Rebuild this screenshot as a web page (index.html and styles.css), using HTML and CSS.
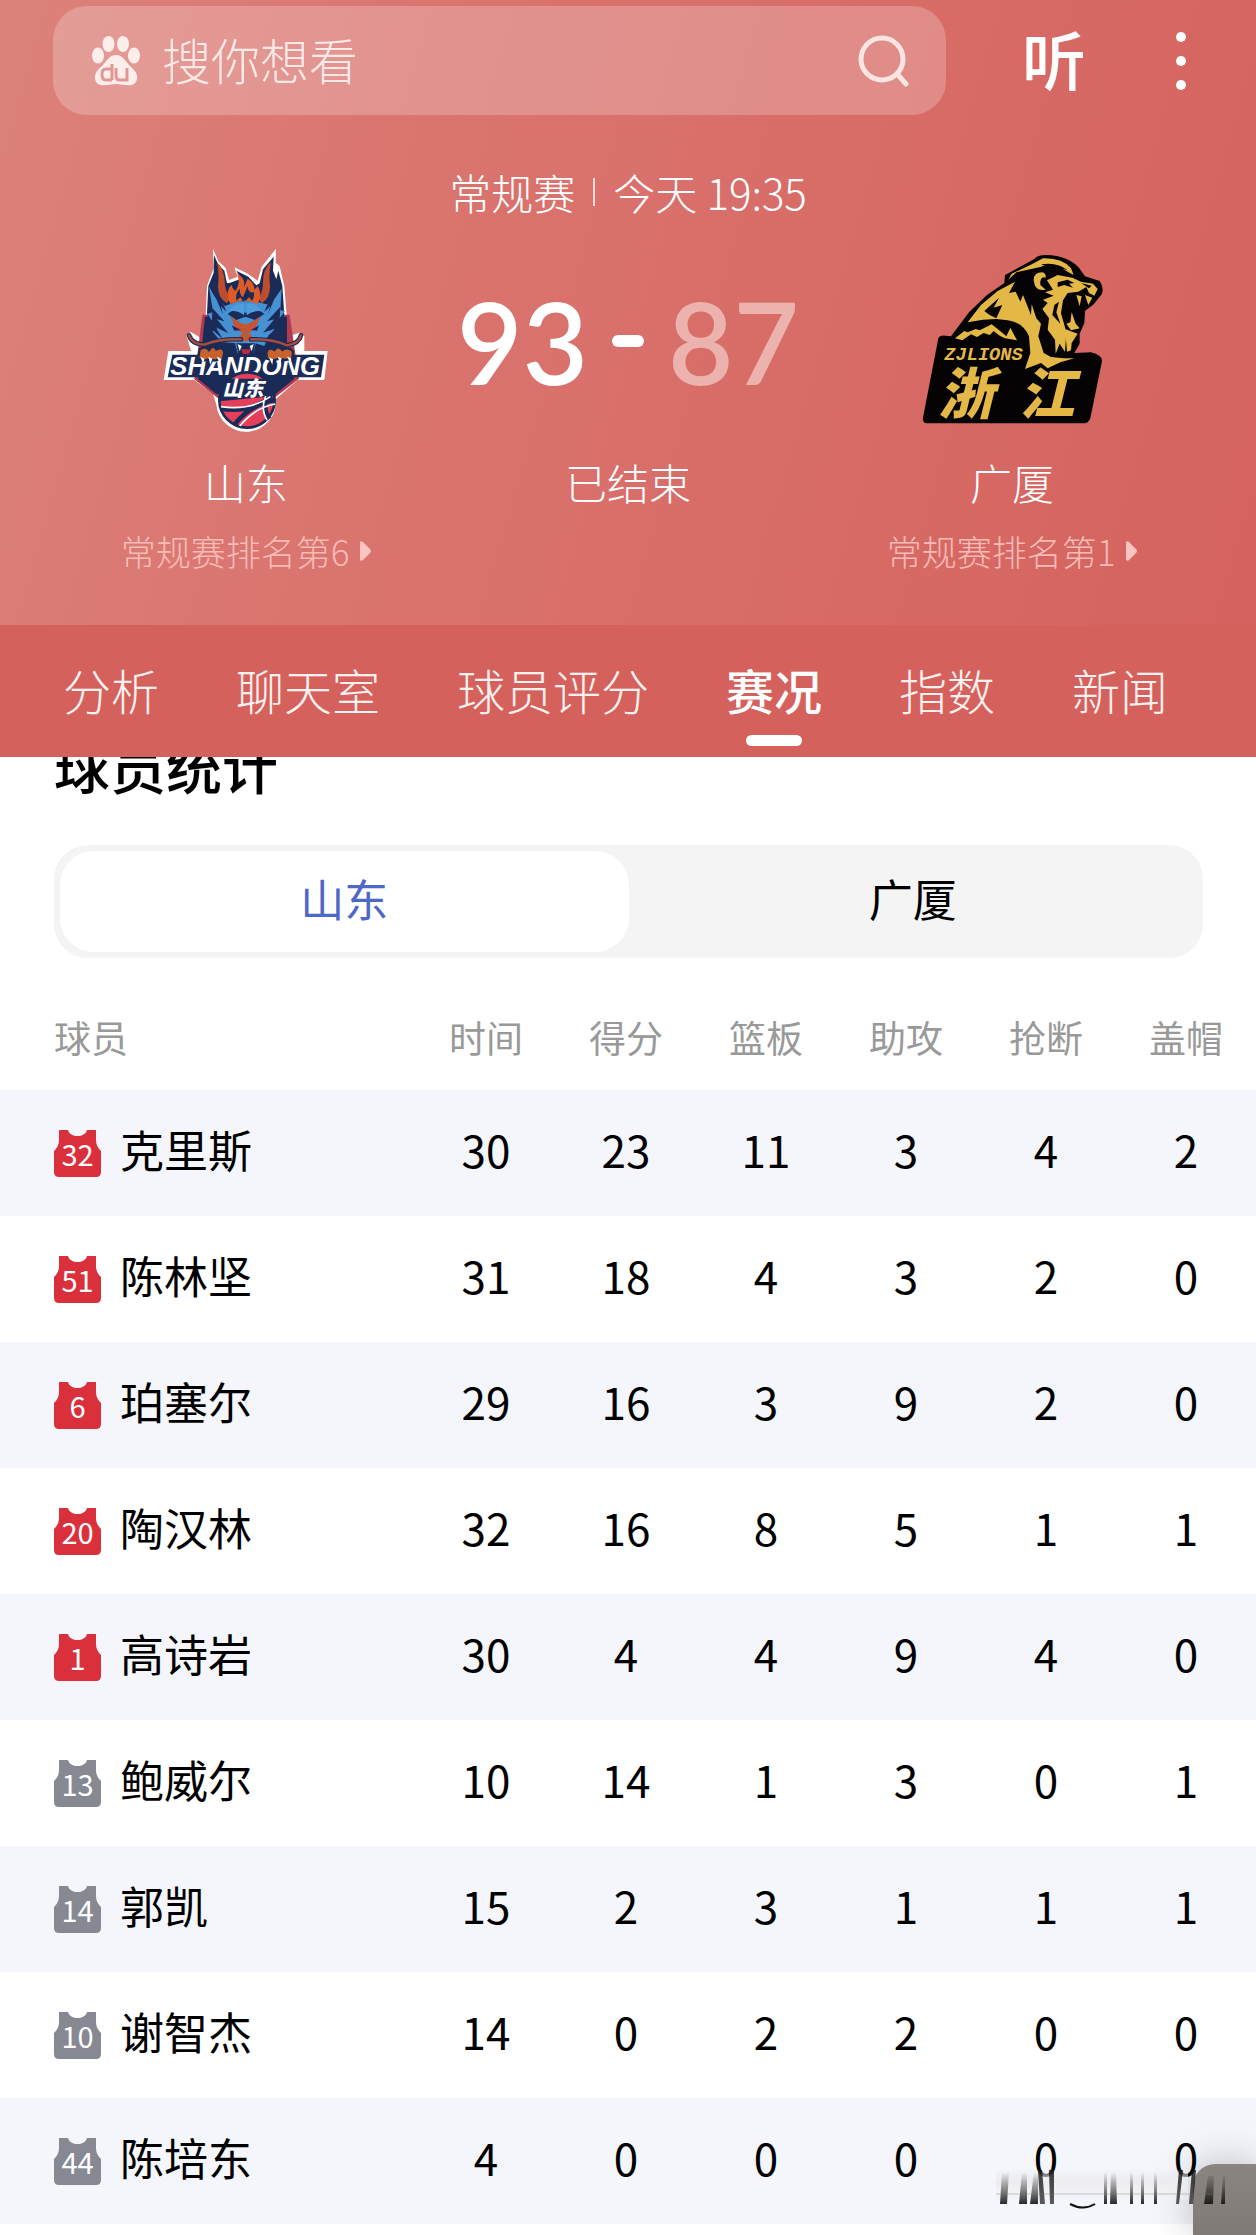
FILE: index.html
```html
<!DOCTYPE html>
<html lang="zh-CN">
<head>
<meta charset="utf-8">
<meta name="viewport" content="width=device-width, initial-scale=1">
<title>山东 93 - 87 广厦</title>
<link rel="stylesheet" href="styles.css">
</head>
<body>
<svg class="defs" aria-hidden="true">
  <symbol id="jersey" viewBox="0 0 47 47">
    <path d="M5 0H14C16 8 31 8 33 0H42V10C42 15 44 18 47 21V42Q47 47 42 47H5Q0 47 0 42V21C3 18 5 15 5 10Z"/>
  </symbol>
</svg>

<header class="hero">
  <div class="topbar">
    <label class="search">
      <svg class="paw" viewBox="0 0 48 50" aria-hidden="true">
        <ellipse cx="16.500" cy="8" rx="6" ry="8"/><ellipse cx="31" cy="8" rx="6" ry="8"/>
        <ellipse cx="6" cy="19.500" rx="6" ry="8"/><ellipse cx="42" cy="19.500" rx="6" ry="8"/>
        <path d="M24 19C17 19 15 25 10 30C4 35 1 40 4 46C8 52 17 48 24 48C31 48 40 52 44 46C47 40 44 35 38 30C33 25 31 19 24 19Z"/>
        <path class="paw-mark" d="M20 28V44M20 33H14Q10 33 10 38.500Q10 44 14 44H20M24 32V40Q24 44 28 44H35V32"/>
      </svg>
      <input class="search-input" type="search" placeholder="搜你想看" aria-label="搜索">
      <svg class="lens" viewBox="0 0 52 52" aria-hidden="true"><circle cx="24" cy="24" r="21"/><path d="M40 40L48 49"/></svg>
    </label>
    <div class="actions">
      <button class="listen" type="button">听</button>
      <button class="more" type="button" aria-label="更多"><i></i><i></i><i></i></button>
    </div>
  </div>

  <p class="event"><span>常规赛</span><i class="bar"></i><span>今天 19:35</span></p>

  <div class="board">
    <section class="team home">
      <div class="crest">
        <svg class="logo-sd" viewBox="60 30 510 561" role="img" aria-label="山东">
          <path fill="#fff" d="M216 38L232 76L254 96L264 132L290 122L280 94L318 112L350 134L362 92L405 38L404 80L416 90L430 150L437 238H446V300L474 290L490 300V345H560L550 432H470L404 490A88 88 0 0 1 226 506L216 474L160 432H68L82 345H150L136 298L150 288L180 306L188 238H194L198 150L218 96Z"/>
          <path fill="#b03a50" d="M184 236H446L474 428L400 486H230L160 430Z"/>
          <path fill="#1b2b57" d="M192 242H438V330L460 428L404 474H226L172 430Z"/>
          <path fill="#1b2b57" d="M219 58L232 86L250 104L258 142L268 140L300 128L286 104L322 122L346 148L356 142L366 100L398 62L396 104L406 130L412 104L424 150L430 238L388 328L344 358H278L226 320L198 232L202 150L218 110Z"/>
          <path fill="#4691d4" d="M204 152L222 184L252 210L290 196H340L382 206L404 184L422 158L418 222L432 226L404 262L414 278L384 296L370 330L344 322L338 352H290L282 322L240 318L214 286L228 278L200 234L216 228Z"/>
          <path fill="#1b2b57" d="M214 216L250 256L228 250L262 292L224 274L246 310L212 280ZM418 212L378 256L400 250L366 290L402 278L374 310L414 284ZM260 234Q290 208 313 232Q340 206 370 234L342 252L313 242L286 252Z"/>
          <path fill="#1b2b57" d="M222 180Q248 196 256 228L240 210L246 236ZM404 180Q380 196 370 228L388 210L380 236Z"/>
          <path fill="#4f9ddd" d="M264 226Q282 198 309 204V238Q290 222 264 226ZM317 204Q346 198 360 226Q338 222 317 238Z"/>
          <path fill="#bd4d2c" d="M228 78Q252 100 252 148Q256 172 268 186L258 202Q226 184 232 138Q234 106 228 78ZM390 78Q364 100 366 146Q364 172 352 186L362 202Q392 184 386 138Q384 104 390 78Z"/>
          <path fill="#dc5b27" d="M268 204Q250 168 272 146Q274 160 284 164Q300 142 288 112Q316 128 308 156L320 128Q342 142 340 162L350 150Q366 176 350 204Q310 184 268 204Z"/>
          <path fill="#1b2b57" d="M286 194Q282 172 296 158Q296 176 306 184L320 150Q322 174 338 168Q342 180 334 194L324 184L316 192L306 196L298 184Z"/>
          <path fill="#c35730" d="M268 242L306 264H320L360 242L340 278L326 290H302L284 278Z"/>
          <path fill="#e34247" d="M280 262L302 276L286 280ZM348 262L326 276L342 280Z"/>
          <path fill="#1b2b57" d="M272 268L300 282L280 284ZM354 268L330 282L348 284Z"/>
          <path fill="#c35730" d="M296 300Q304 288 316 292Q330 290 334 304L322 316H304Z"/>
          <path fill="none" stroke="#1b2b57" stroke-width="14" stroke-linecap="round" d="M144 298Q154 326 190 326Q236 308 300 310M480 298Q474 324 438 328Q392 308 330 310"/>
          <path fill="none" stroke="#a94d3a" stroke-width="7" stroke-linecap="round" d="M144 298Q154 326 190 326Q236 308 300 310M480 298Q474 324 438 328Q392 308 330 310"/>
          <path fill="#1b2b57" d="M286 322H342L336 362H294Z"/><path fill="#b92a3b" d="M300 340H330L324 354H306Z"/>
          <path fill="#fff" d="M290 324L302 330L296 346ZM338 324L326 330L332 346Z"/>
          <path fill="#1b2b57" d="M94 356H550L540 424H80Z"/>
          <text class="sd-word" x="88" y="417">SHANDONG</text>
          <path fill="#c8622c" stroke="#1b2b57" stroke-width="7" d="M176 340Q194 328 204 342Q216 324 226 340Q246 330 250 350L246 368L222 374L204 370L186 374L172 366ZM376 350Q382 330 400 342Q412 326 424 342Q442 330 456 346L454 368L432 372L414 368L396 374L378 368Z"/>
          <path fill="#fff" d="M178 362L190 368L188 386ZM202 362L214 368L208 386ZM228 362L242 368L236 384ZM384 364L396 370L394 386ZM410 362L422 366L418 384ZM438 362L450 366L450 384Z"/>
          <circle cx="318" cy="492" r="83" fill="#e4405a" stroke="#1b2b57" stroke-width="8"/>
          <path fill="#1b2b57" d="M240 428H384L398 480L236 496Z"/>
          <path fill="none" stroke="#1b2b57" stroke-width="14" d="M238 518Q330 532 392 480M280 566Q330 504 402 492M380 470Q362 520 386 548"/>
          <path fill="none" stroke="#fff" stroke-width="5" d="M240 512Q330 524 388 482M296 570Q340 516 402 504M374 480Q358 520 378 552"/>
          <text class="sd-cn" x="244" y="481">山东</text>
        </svg>
      </div>
      <h2 class="name">山东</h2>
      <a class="rank" href="#rank-home">常规赛排名第6<svg class="tri" viewBox="0 0 11 20" aria-hidden="true"><path d="M0 1Q2-1 4 2L10 8Q12 10 10 12L4 18Q2 21 0 19Z"/></svg></a>
    </section>

    <section class="result">
      <p class="score"><b>93</b><i class="dash"></i><b class="lost">87</b></p>
      <p class="name">已结束</p>
    </section>

    <section class="team away">
      <div class="crest">
        <svg class="logo-zj" viewBox="60 50 549 516" role="img" aria-label="广厦">
          <path fill="#050303" d="M400 68Q408 56 436 56Q500 58 534 94L552 120L596 134Q610 154 602 174L578 204L552 224L550 260L536 292V322L520 350L570 348Q604 356 603 374L568 546Q562 562 548 561H78Q64 560 66 544L112 306Q116 296 134 298L150 300L204 228L258 176L310 140L312 116L356 92Z"/>
          <path fill="#e4b847" d="M388 86L426 66Q484 64 510 96L518 116L496 104Q452 72 418 92L346 108L322 130L332 112Z"/>
          <path fill="#050303" d="M420 84Q470 76 500 102L470 94L440 92Z"/>
          <path fill="#e4b847" d="M200 258L240 206L290 164L342 136L324 170L344 166L358 196L366 176L390 236L392 204L406 246L420 262L412 300L428 350L450 362L488 366L520 366L478 378L440 396L420 380L372 398L388 350L384 300Q366 258 320 252L286 248L246 250Z"/>
          <path fill="#050303" d="M250 224L294 184L278 214L304 206L286 246L266 236Z"/>
          <path fill="#e4b847" d="M398 132Q398 108 424 108Q436 112 434 124Q416 118 418 146L434 160Q410 164 402 148ZM438 132L470 116L514 124L540 136L576 142L590 158L580 178L564 170L556 152L532 166L500 170L486 192L480 230L496 288L492 346L476 322L464 352L462 310L440 280L444 246L424 218L440 200L426 190L458 178L432 168L456 160Z"/>
          <path fill="#050303" d="M470 138L500 130L520 140L504 142L516 154L490 146L470 152ZM540 140L572 148L564 156ZM504 178L534 168L572 180L552 212L542 270L518 286L494 272L482 234L488 198ZM460 206L474 196L466 228L478 262L454 236Z"/>
          <path fill="#e4b847" d="M526 176L542 180L536 210ZM552 176L574 184L562 206ZM512 228L524 262L536 276L510 282L496 262L508 258Z"/>
          <path fill="#050303" d="M190 300L240 262H316Q372 276 372 330L356 392L180 380Z"/>
          <path fill="#e4b847" d="M492 278L530 292L512 320L510 342L498 346ZM162 306L190 284L200 288L224 278L236 282L272 264L302 288L316 300L328 274L348 312L312 306L296 298L278 284L266 296L248 290L228 302L210 294L184 312Z"/>
          <text class="zj-word" x="130" y="372">ZJLIONS</text>
          <text class="zj-cn" x="112" y="532">浙</text>
          <text class="zj-cn" x="354" y="532">江</text>
        </svg>
      </div>
      <h2 class="name">广厦</h2>
      <a class="rank" href="#rank-away">常规赛排名第1<svg class="tri" viewBox="0 0 11 20" aria-hidden="true"><path d="M0 1Q2-1 4 2L10 8Q12 10 10 12L4 18Q2 21 0 19Z"/></svg></a>
    </section>
  </div>
</header>

<nav class="tabs">
  <a href="#analysis">分析</a>
  <a href="#chat">聊天室</a>
  <a href="#rating">球员评分</a>
  <a class="active" href="#live" aria-current="page">赛况</a>
  <a href="#odds">指数</a>
  <a href="#news">新闻</a>
</nav>

<main class="stats">
  <h1 class="title">球员统计</h1>
  <div class="switch">
    <button class="on" type="button" aria-pressed="true">山东</button>
    <button type="button" aria-pressed="false">广厦</button>
  </div>
  <table class="table">
    <thead>
      <tr><th class="who" scope="col">球员</th><th scope="col">时间</th><th scope="col">得分</th><th scope="col">篮板</th><th scope="col">助攻</th><th scope="col">抢断</th><th scope="col">盖帽</th></tr>
    </thead>
    <tbody>
      <tr><td class="who"><div class="player"><span class="shirt"><svg><use href="#jersey"/></svg><b>32</b></span>克里斯</div></td><td>30</td><td>23</td><td>11</td><td>3</td><td>4</td><td>2</td></tr>
      <tr><td class="who"><div class="player"><span class="shirt"><svg><use href="#jersey"/></svg><b>51</b></span>陈林坚</div></td><td>31</td><td>18</td><td>4</td><td>3</td><td>2</td><td>0</td></tr>
      <tr><td class="who"><div class="player"><span class="shirt"><svg><use href="#jersey"/></svg><b>6</b></span>珀塞尔</div></td><td>29</td><td>16</td><td>3</td><td>9</td><td>2</td><td>0</td></tr>
      <tr><td class="who"><div class="player"><span class="shirt"><svg><use href="#jersey"/></svg><b>20</b></span>陶汉林</div></td><td>32</td><td>16</td><td>8</td><td>5</td><td>1</td><td>1</td></tr>
      <tr><td class="who"><div class="player"><span class="shirt"><svg><use href="#jersey"/></svg><b>1</b></span>高诗岩</div></td><td>30</td><td>4</td><td>4</td><td>9</td><td>4</td><td>0</td></tr>
      <tr><td class="who"><div class="player"><span class="shirt bench"><svg><use href="#jersey"/></svg><b>13</b></span>鲍威尔</div></td><td>10</td><td>14</td><td>1</td><td>3</td><td>0</td><td>1</td></tr>
      <tr><td class="who"><div class="player"><span class="shirt bench"><svg><use href="#jersey"/></svg><b>14</b></span>郭凯</div></td><td>15</td><td>2</td><td>3</td><td>1</td><td>1</td><td>1</td></tr>
      <tr><td class="who"><div class="player"><span class="shirt bench"><svg><use href="#jersey"/></svg><b>10</b></span>谢智杰</div></td><td>14</td><td>0</td><td>2</td><td>2</td><td>0</td><td>0</td></tr>
      <tr><td class="who"><div class="player"><span class="shirt bench"><svg><use href="#jersey"/></svg><b>44</b></span>陈培东</div></td><td>4</td><td>0</td><td>0</td><td>0</td><td>0</td><td>0</td></tr>
    </tbody>
  </table>
  <div class="floater" aria-hidden="true"></div>
  <svg class="smear" viewBox="0 0 240 44" aria-hidden="true">
    <defs>
      <linearGradient id="fade" x1="0" y1="0" x2="0" y2="1"><stop offset="0" stop-color="#222" stop-opacity="0"/><stop offset="1" stop-color="#111" stop-opacity=".9"/></linearGradient>
      <linearGradient id="veil" x1="0" y1="0" x2="0" y2="1"><stop offset="0" stop-color="#ececef" stop-opacity=".2"/><stop offset=".4" stop-color="#ececef"/><stop offset="1" stop-color="#f2f3f7" stop-opacity=".4"/></linearGradient>
      <linearGradient id="dark" x1="0" y1="0" x2="0" y2="1"><stop offset="0" stop-color="#111"/><stop offset="1" stop-color="#333"/></linearGradient>
    </defs>
    <path fill="url(#veil)" d="M4 4H196V34H4Z"/>
    <path fill="url(#fade)" d="M10 6H17L15 38H8ZM30 6H35V38H27ZM42 6H46V38H38ZM112 6H115V38H112ZM119 6H124L125 38H118ZM138 6H141V38H138ZM149 6H152V38H149ZM162 6H165V38H162ZM216 10H222L221 38H212ZM231 10H233V38H229Z"/>
    <path fill="url(#dark)" opacity=".8" d="M46 4H50L53 38H48ZM57 4H62V38H58ZM187 4H191L187 38H184ZM200 4H204L201 38H197Z"/>
    <path fill="none" stroke="#777" stroke-width="1" opacity=".4" d="M4 28H230"/>
    <path fill="none" stroke="#111" stroke-width="2" d="M78 38Q91 45 103 38"/>
  </svg>
</main>
</body>
</html>
```
FILE: styles.css
```css
* { box-sizing: border-box; }

body {
  margin: 0;
  background: #fff;
  color: #000;
  font-family: "Noto Sans CJK SC", sans-serif;
}

h1, h2, p { margin: 0; font-weight: inherit; }
a { color: inherit; text-decoration: none; }
button { border: 0; padding: 0; background: none; color: inherit; font: inherit; cursor: pointer; }
.defs { position: absolute; width: 0; height: 0; }

/* Header */
.hero {
  padding: 6px 0 47px;
  background: linear-gradient(106deg, #dc827b 0%, #da7570 30%, #d86d68 60%, #d5625e 100%);
  color: #fff1ef;
  font-weight: 300;
}
.topbar { display: flex; align-items: center; padding-left: 53px; }
.search {
  display: flex;
  flex: 1;
  align-items: center;
  min-width: 0;
  height: 109px;
  padding: 0 36px 0 39px;
  border-radius: 34px;
  background: rgba(255, 255, 255, .22);
}
.paw { width: 48px; height: 50px; fill: #fdeeec; }
.paw-mark { fill: none; stroke: #e19893; stroke-width: 3; }
.search-input {
  flex: 1;
  min-width: 0;
  margin-left: 22px;
  padding: 0 0 4px;
  border: 0;
  outline: 0;
  background: none;
  color: #ffe9e6;
  font: 300 49px/72px "Noto Sans CJK SC", sans-serif;
}
.search-input::placeholder { color: #ffe9e6; opacity: 1; }
.lens { width: 52px; height: 52px; fill: none; stroke: #ffe5e1; stroke-width: 5; stroke-linecap: round; }
.actions { display: flex; align-items: center; justify-content: space-between; width: 310px; padding: 0 55px 0 76px; }
.listen { padding-bottom: 8px; color: #fff; font-size: 64px; font-weight: 500; line-height: 80px; }
.more { display: flex; flex-direction: column; align-items: center; gap: 14px; width: 40px; }
.more i { width: 10px; height: 10px; border-radius: 50%; background: #fff; }

.event { display: flex; align-items: center; justify-content: center; gap: 18px; margin-top: 47px; color: #fff; font-size: 42px; line-height: 60px; }
.bar { width: 2px; height: 28px; background: #fbdad7; }

.board { display: grid; grid-template-columns: 1fr 336px 1fr; margin-top: 18px; text-align: center; }
.home { padding-left: 32px; }
.away { padding-right: 28px; }
.crest, .score { display: flex; align-items: center; justify-content: center; height: 198px; }
.logo-sd { width: 170px; height: 187px; }
.logo-zj { width: 183px; height: 172px; }
.sd-word { fill: #fff; font: italic 700 77px "Liberation Sans", sans-serif; }
.sd-cn { fill: #fff; font: italic 900 62px "Noto Sans CJK SC", sans-serif; }
.zj-word { fill: #e4b847; font: italic 700 56px "Liberation Mono", monospace; }
.zj-cn { fill: #e4b847; font: italic 900 166px "Noto Sans CJK SC", sans-serif; }
.name { margin-top: 14px; color: #fff; font-size: 42px; line-height: 60px; }
.rank { display: flex; align-items: center; justify-content: center; gap: 11px; margin-top: 14px; color: #f8bbb6; font-size: 35px; line-height: 50px; padding-bottom: 2px; }
.tri { width: 11px; height: 20px; fill: #fbc4c1; }
.score { gap: 24px; padding-top: 4px; color: #fff; font: 600 113px/1 Lato, sans-serif; }
.score b { font-weight: 600; }
.lost { color: #ecb3ae; }
.dash { flex: none; width: 32px; height: 12px; border-radius: 6px; background: #fff; }

/* Section tabs */
.tabs {
  display: flex;
  justify-content: space-between;
  padding: 34px 88px 0 63px;
  height: 132px;
  background: #d5615d;
  color: #fff1ef;
  font-size: 48px;
  font-weight: 300;
  line-height: 60px;
}
.tabs a { display: flex; flex-direction: column; align-items: center; gap: 16px; }
.tabs .active { color: #fff; font-weight: 500; }
.active::after { content: ""; width: 56px; height: 11px; border-radius: 6px; background: #fff; }

/* Player statistics */
.stats { position: relative; overflow: hidden; padding-bottom: 11px; }
.title { margin: -27px 54px 0; font-size: 56px; font-weight: 500; line-height: 70px; }
.switch { display: flex; margin: 45px 53px 0 54px; padding: 6px; border-radius: 34px; background: #f4f4f5; font-size: 44px; line-height: 95px; }
.switch button { flex: 1; padding-bottom: 6px; border-radius: 34px; }
.switch .on { background: #fff; color: #4e68c8; }

.table { width: 100%; border-collapse: collapse; table-layout: fixed; }
.table th { width: 140px; height: 132px; padding: 26px 0 0; color: #999; font-size: 37px; font-weight: 400; }
.table td { height: 126px; padding: 0 0 8px; font-size: 44px; line-height: 64px; text-align: center; }
.table .who { width: auto; padding-left: 54px; text-align: left; }
.table tbody tr:nth-child(odd) { background: #f4f6fb; }
.player { display: flex; align-items: center; gap: 19px; }
.shirt { display: grid; place-items: center; width: 47px; height: 47px; margin-top: 8px; color: #fff; }
.shirt svg, .shirt b { grid-area: 1 / 1; }
.shirt svg { width: 47px; height: 47px; fill: #da303c; }
.shirt b { font-size: 29px; font-weight: 400; line-height: 40px; }
.bench svg { fill: #868892; }

/* Floating layer over the last row */
.floater {
  position: absolute;
  right: 0;
  bottom: 0;
  width: 63px;
  height: 71px;
  border-radius: 22px 0 0 0;
  background: linear-gradient(180deg, #8a8580, #7f7a75);
  box-shadow: 0 0 40px rgba(0, 0, 0, .25);
}
.smear { position: absolute; right: 24px; bottom: 25px; width: 240px; height: 44px; }
```
